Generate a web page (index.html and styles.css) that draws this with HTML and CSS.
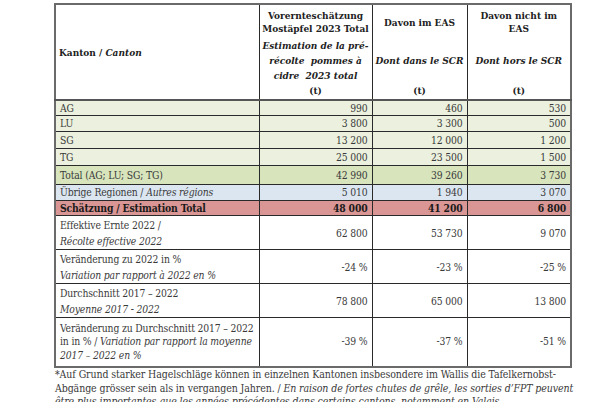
FILE: index.html
```html
<!DOCTYPE html>
<html lang="de">
<head>
<meta charset="utf-8">
<link rel="stylesheet" href="styles.css">
</head>
<body>
<div class="page">
<table class="tbl">
<colgroup><col class="c1"><col class="c2"><col class="c3"><col class="c4"></colgroup>
<thead>
<tr class="head">
<th class="kanton">Kanton / <i>Canton</i></th>
<th><div class="hcell"><div class="hd">Vorernteschätzung Mostäpfel 2023 Total</div><div class="hi">Estimation de la pré-récolte&nbsp; pommes à cidre&nbsp; 2023 total</div><div class="ht">(t)</div></div></th>
<th><div class="hcell"><div class="hd">Davon im EAS</div><div class="hi">Dont dans le SCR</div><div class="ht">(t)</div></div></th>
<th><div class="hcell"><div class="hd">Davon nicht im EAS</div><div class="hi">Dont hors le SCR</div><div class="ht">(t)</div></div></th>
</tr>
</thead>
<tbody>
<tr class="g r1"><td>AG</td><td class="n">990</td><td class="n">460</td><td class="n">530</td></tr>
<tr class="g r2"><td>LU</td><td class="n">3 800</td><td class="n">3 300</td><td class="n">500</td></tr>
<tr class="g r3"><td>SG</td><td class="n">13 200</td><td class="n">12 000</td><td class="n">1 200</td></tr>
<tr class="g r3"><td>TG</td><td class="n">25 000</td><td class="n">23 500</td><td class="n">1 500</td></tr>
<tr class="tot"><td>Total (AG; LU; SG; TG)</td><td class="n">42 990</td><td class="n">39 260</td><td class="n">3 730</td></tr>
<tr class="blue"><td>Übrige Regionen / <i>Autres régions</i></td><td class="n">5 010</td><td class="n">1 940</td><td class="n">3 070</td></tr>
<tr class="red"><td>Schätzung / Estimation Total</td><td class="n">48 000</td><td class="n">41 200</td><td class="n">6 800</td></tr>
<tr class="two"><td><div>Effektive Ernte 2022 /</div><div><i>Récolte effective 2022</i></div></td><td class="n">62 800</td><td class="n">53 730</td><td class="n">9 070</td></tr>
<tr class="two"><td><div>Veränderung zu 2022 in %</div><div><i>Variation par rapport à 2022 en %</i></div></td><td class="n">-24 %</td><td class="n">-23 %</td><td class="n">-25 %</td></tr>
<tr class="two"><td><div>Durchschnitt 2017 – 2022</div><div><i>Moyenne 2017 - 2022</i></div></td><td class="n">78 800</td><td class="n">65 000</td><td class="n">13 800</td></tr>
<tr class="three"><td>Veränderung zu Durchschnitt 2017 – 2022 in in % / <i>Variation par rapport la moyenne 2017 – 2022 en %</i></td><td class="n">-39 %</td><td class="n">-37 %</td><td class="n">-51 %</td></tr>
</tbody>
</table>
<p class="note">*Auf Grund starker Hagelschläge können in einzelnen Kantonen insbesondere im Wallis die Tafelkernobst-Abgänge grösser sein als in vergangen Jahren. / <i>En raison de fortes chutes de grêle, les sorties d’FPT peuvent être plus importantes que les années précédentes dans certains cantons, notamment en Valais.</i></p>
</div>
</body>
</html>
```
FILE: styles.css
```css
html, body {
  margin: 0;
  padding: 0;
  background: #ffffff;
  overflow: hidden;
}
body {
  font-family: "DejaVu Serif Condensed", "DejaVu Serif", serif;
  color: #3a3a3a;
}
.page {
  padding: 3px 0 0 54px;
}
.tbl {
  border-collapse: collapse;
  table-layout: fixed;
  width: 516px;
  border: 2px solid #6a6a6a;
  font-size: 10.3px;
}
.c1 { width: 204px; }
.c2 { width: 113px; }
.c3 { width: 95px; }
.c4 { width: 104px; }
.tbl td, .tbl th {
  border: 1px solid #2a2a2a;
  padding: 0 4px;
}
.head th {
  border-bottom: 2px solid #555;
  border-top: 2px solid #6a6a6a;
  height: 94px;
  padding: 0 2px;
  vertical-align: top;
  color: #222;
  font-size: 10px;
  text-align: center;
}
.head th.kanton {
  text-align: left;
  vertical-align: middle;
  padding-left: 3px;
  padding-top: 0;
}
.hcell {
  display: flex;
  flex-direction: column;
  padding-top: 4px;
}
.hd {
  height: 26px;
  line-height: 13px;
  display: flex;
  align-items: center;
  justify-content: center;
}
.hi {
  margin-top: 3px;
  height: 45px;
  line-height: 15px;
  display: flex;
  align-items: center;
  justify-content: center;
  font-style: italic;
}
.ht {
  margin-top: 1px;
  line-height: 13px;
  height: 13px;
}
.tbl td {
  line-height: 13px;
  vertical-align: middle;
  white-space: nowrap;
  letter-spacing: -0.15px;
}
.tbl td.n { text-align: right; }
.g td { background: #ebf1de; }
.r1 td { height: 14px; }
.r2 td { height: 15px; }
.r3 td { height: 16px; }
.tot td { background: #d7e4bc; height: 18px; }
.blue td { background: #dce6f1; height: 15px; }
.red td { background: #da9694; height: 14px; font-weight: bold; color: #1a1a1a; }
.two td { height: 33px; line-height: 16px; }
.three td { height: 48px; line-height: 13.5px; white-space: normal; }
.note {
  margin: 0;
  padding: 0 0 0 1px;
  width: 520px;
  font-size: 10.5px;
  line-height: 13.5px;
  letter-spacing: -0.1px;
  color: #3a3a3a;
}
```
